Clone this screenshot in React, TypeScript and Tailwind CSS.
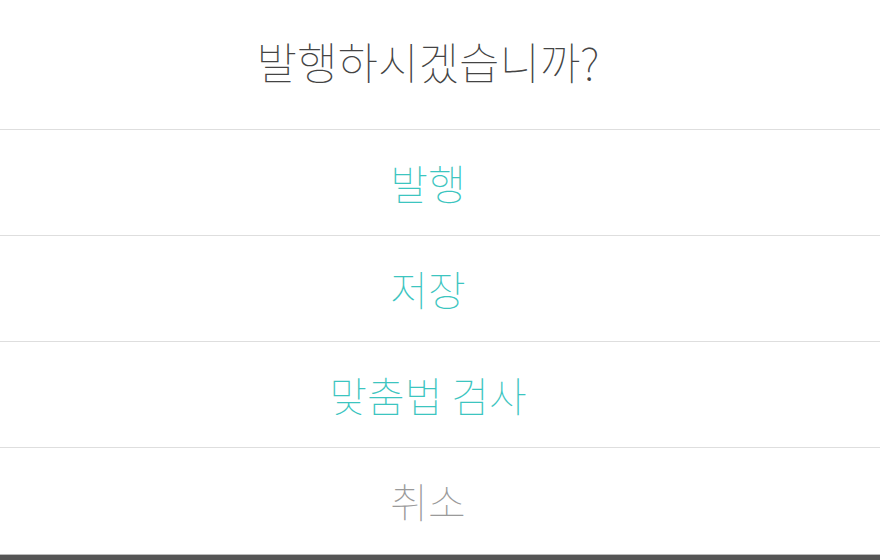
import React from "react";

const options = [
  { label: "발행", tone: "text-[#3cc5c0]" },
  { label: "저장", tone: "text-[#3cc5c0]" },
  { label: "맞춤법 검사", tone: "text-[#3cc5c0]" },
  { label: "취소", tone: "text-[#9a9a9a]" },
];

export default function App() {
  return (
    <div
      className="w-[880px] h-[560px] bg-white flex flex-col overflow-hidden"
      style={{ fontFamily: '"Noto Sans CJK KR", "Noto Sans", sans-serif' }}
    >
      <div className="h-[130px] flex items-center justify-center pr-[24px] pb-[8px] border-b border-[#dedede]">
        <h1 className="text-[44px] font-thin text-[#444]">발행하시겠습니까?</h1>
      </div>
      {options.map((o, i) => (
        <button
          key={o.label}
          className={`h-[106px] shrink-0 flex items-center justify-center pr-[24px] text-[41px] font-thin ${o.tone} ${
            i < options.length - 1 ? "border-b border-[#dedede]" : ""
          }`}
        >
          {o.label}
        </button>
      ))}
      <div className="flex-1 bg-[#555] border-t border-[#bbb]" />
    </div>
  );
}
